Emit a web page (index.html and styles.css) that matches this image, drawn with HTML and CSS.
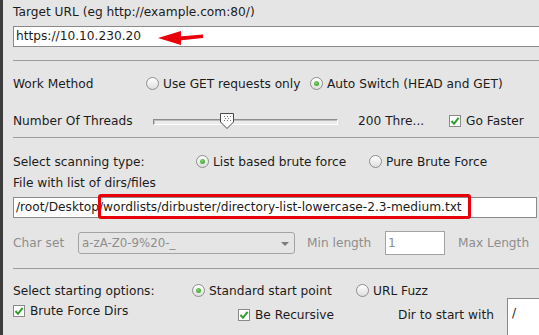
FILE: index.html
```html
<!DOCTYPE html>
<html lang="en">
<head>
  <meta charset="UTF-8" />
  <title>DirBuster</title>
  <link rel="stylesheet" href="styles.css">
</head>
<body>
  <div class="window">
    <div class="label">Target URL (eg http://example.com:80/)</div>
    <div class="field url-field">https://10.10.230.20
      <svg class="arrow" width="50" height="20" viewBox="0 0 50 20">
        <polygon points="3,11 26,4 26,18" fill="#e8000b"/>
        <polygon points="24,9.5 48,7.5 48,11 24,13.5" fill="#e8000b"/>
      </svg>
    </div>

    <div class="sep"></div>

    <div class="row method-row">
      <span class="cap w-method">Work Method</span>
      <div class="opt w-get"><span class="radio"></span>Use GET requests only</div>
      <div class="opt"><span class="radio on"></span>Auto Switch (HEAD and GET)</div>
    </div>

    <div class="row threads-row">
      <span class="cap w-threads">Number Of Threads</span>
      <div class="slider">
        <div class="track"></div>
        <svg class="thumb" width="16" height="18" viewBox="0 0 16 18">
          <path d="M1.5 1.5 H14.5 V10 L8 16.5 L1.5 10 Z" fill="#fbfbfb" stroke="#4a4a4a"/>
          <g fill="#777">
            <rect x="5" y="4" width="1" height="1"/><rect x="8" y="4" width="1" height="1"/><rect x="11" y="4" width="1" height="1"/>
            <rect x="6" y="6" width="1" height="1"/><rect x="9" y="6" width="1" height="1"/>
            <rect x="5" y="8" width="1" height="1"/><rect x="8" y="8" width="1" height="1"/><rect x="11" y="8" width="1" height="1"/>
          </g>
        </svg>
      </div>
      <span class="w-count">200 Thre...</span>
      <div class="opt"><span class="check on"><svg width="10" height="10" viewBox="0 0 10 10"><path d="M1.5 5 L4 7.8 L8.6 1.8" fill="none" stroke="#2f9d2a" stroke-width="2"/></svg></span>Go Faster</div>
    </div>

    <div class="sep sep-2"></div>

    <div class="row scan-row">
      <span class="cap w-scan">Select scanning type:</span>
      <div class="opt w-list"><span class="radio on"></span>List based brute force</div>
      <div class="opt"><span class="radio"></span>Pure Brute Force</div>
    </div>

    <div class="row file-label">File with list of dirs/files</div>

    <div class="field file-field">/root/Desktop/wordlists/dirbuster/directory-list-lowercase-2.3-medium.txt
      <div class="mark"></div>
    </div>

    <div class="row charset-row disabled">
      <span class="cap w-charset">Char set</span>
      <div class="combo">a-zA-Z0-9%20-_<span class="drop"></span></div>
      <span class="w-min">Min length</span>
      <div class="small-input">1</div>
      <span class="max">Max Length</span>
    </div>

    <div class="sep sep-3"></div>

    <div class="row start-row">
      <span class="cap w-start">Select starting options:</span>
      <div class="opt w-std"><span class="radio on"></span>Standard start point</div>
      <div class="opt"><span class="radio"></span>URL Fuzz</div>
    </div>

    <div class="last-row">
      <div class="item opt w-brute"><span class="check on"><svg width="10" height="10" viewBox="0 0 10 10"><path d="M1.5 5 L4 7.8 L8.6 1.8" fill="none" stroke="#2f9d2a" stroke-width="2"/></svg></span>Brute Force Dirs</div>
      <div class="item opt w-rec low"><span class="check on"><svg width="10" height="10" viewBox="0 0 10 10"><path d="M1.5 5 L4 7.8 L8.6 1.8" fill="none" stroke="#2f9d2a" stroke-width="2"/></svg></span>Be Recursive</div>
      <span class="item w-dir low">Dir to start with</span>
      <div class="dir-input">/</div>
    </div>
  </div>
</body>
</html>
```

FILE: styles.css
```css
body {
  margin: 0;
  background: #e5e5e5;
  font-family: "DejaVu Sans", sans-serif;
  font-size: 12.2px;
  color: #1c1c1c;
  overflow: hidden;
}
.window {
  height: 335px;
  box-sizing: border-box;
  border-left: 3px solid #3c3c3c;
  padding: 5px 0 0 10px;
  overflow: hidden;
}
.label {
  height: 15px;
  line-height: 15px;
}
.field {
  position: relative;
  height: 21px;
  box-sizing: border-box;
  border: 1px solid #8a8a8a;
  background: #fff;
  padding-left: 2px;
  line-height: 19px;
  white-space: nowrap;
}
.url-field {
  margin-top: 6px;
  margin-right: -10px;
}
.arrow {
  position: absolute;
  left: 141px;
  top: 0px;
}
.sep {
  border-top: 1px solid #9c9c9c;
  margin-top: 13px;
}
.sep-2 { margin-top: 7px; }
.sep-3 { margin-top: 13px; }

.row {
  display: flex;
  align-items: center;
  height: 19px;
  white-space: nowrap;
}
.row > * { flex: none; }
.method-row { margin-top: 13px; }
.threads-row { margin-top: 18px; }
.scan-row { margin-top: 14px; }
.file-label { margin-top: 2px; }
.start-row { margin-top: 14px; height: 15px; }

.w-method { width: 133px; }
.w-get { width: 164px; }
.w-threads { width: 140px; }
.w-count { margin-left: 18px; width: 91px; }
.w-scan { width: 183px; }
.w-list { width: 173px; }
.w-start { width: 179px; }
.w-std { width: 164px; }

.opt {
  display: flex;
  align-items: center;
}
.radio {
  width: 13px;
  height: 13px;
  box-sizing: border-box;
  border-radius: 50%;
  border: 1px solid #8e8e8e;
  background: linear-gradient(#ffffff, #dedede);
  margin-right: 4px;
  display: flex;
  align-items: center;
  justify-content: center;
}
.radio.on::after {
  content: "";
  width: 5px;
  height: 5px;
  border-radius: 50%;
  background: radial-gradient(circle at 40% 35%, #7fd36b, #2e9a23);
}
.check {
  width: 12px;
  height: 12px;
  box-sizing: border-box;
  border: 1px solid #8a8a8a;
  background: #fff;
  margin-right: 5px;
  display: flex;
  align-items: center;
  justify-content: center;
}

.slider {
  position: relative;
  width: 187px;
  height: 19px;
  display: flex;
  align-items: center;
}
.track {
  width: 185px;
  height: 6px;
  box-sizing: border-box;
  border: 1px solid #8c8c8c;
  border-right-color: #fff;
  border-bottom-color: #fff;
  background: #ececec;
  box-shadow: inset 1px 1px 0 #bdbdbd;
  margin-top: 2px;
}
.thumb {
  position: absolute;
  left: 66px;
  top: 1px;
}

.file-field {
  margin-top: 5px;
  margin-right: 2px;
}
.mark {
  position: absolute;
  left: 84px;
  top: -4px;
  width: 373px;
  height: 25px;
  box-sizing: border-box;
  border: 3px solid #e8000b;
  border-radius: 3px;
}

.charset-row {
  margin-top: 13px;
  height: 24px;
}
.disabled { color: #8e8e8e; }
.w-charset { width: 65px; }
.combo {
  position: relative;
  width: 217px;
  height: 22px;
  box-sizing: border-box;
  border: 1px solid #a3a3a3;
  border-radius: 3px;
  padding-left: 3px;
  line-height: 20px;
  color: #8e8e8e;
  font-size: 11.8px;
}
.drop {
  position: absolute;
  right: 5px;
  top: 9px;
  border-left: 4px solid transparent;
  border-right: 4px solid transparent;
  border-top: 4px solid #7c7c7c;
}
.w-min {
  margin-left: 12px;
  width: 78px;
}
.small-input {
  width: 60px;
  height: 24px;
  box-sizing: border-box;
  border: 1px solid #a3a3a3;
  background: #fff;
  padding-left: 2px;
  line-height: 22px;
}
.max { margin-left: 13px; }

.last-row {
  display: flex;
  align-items: flex-start;
  white-space: nowrap;
}
.last-row > * { flex: none; }
.item {
  height: 14px;
  margin-top: 6px;
  line-height: 14px;
}
.item.low { margin-top: 10px; }
.w-brute { width: 225px; }
.w-rec { width: 160px; }
.w-dir { width: 109px; }
.dir-input {
  width: 60px;
  height: 40px;
  box-sizing: border-box;
  border: 1px solid #8a8a8a;
  background: #fff;
  padding: 7px 0 0 4px;
}
```
